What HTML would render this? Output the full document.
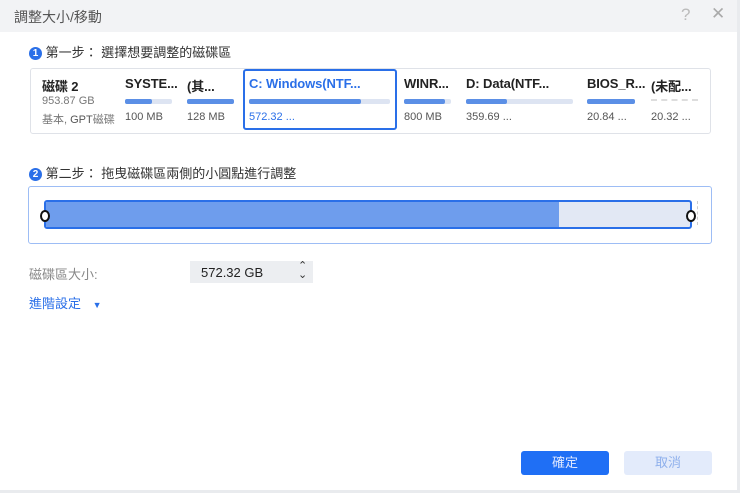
<!DOCTYPE html>
<html><head><meta charset="utf-8"><style>
body{margin:0;width:740px;height:493px;background:#e9ebee;font-family:"Liberation Sans","Noto Sans CJK TC",sans-serif;position:relative;overflow:hidden}
.win{position:absolute;left:0;top:0;width:737px;height:490px;background:#fff}
.title{position:absolute;left:0;top:0;width:737px;height:32px;background:#f2f3f5;font-size:14px;color:#555}
.a{position:absolute;white-space:nowrap}
.num{display:inline-block;width:13px;height:13px;border-radius:50%;background:#2a6fe8;color:#fff;font-size:10px;text-align:center;line-height:13px;font-weight:bold;vertical-align:1px}
.panel{position:absolute;left:30px;top:68px;width:679px;height:64px;border:1px solid #dfe2e8;border-radius:3px}
.b{font-weight:bold;font-size:13px;color:#222;letter-spacing:-0.1px}
.s{font-size:11px;color:#555}
.bar{position:absolute;height:5px;background:#dde4f2;border-radius:2px}
.bar i{position:absolute;left:0;top:0;bottom:0;background:#5b8fe6;border-radius:2px}
</style></head><body>
<div class="win">
<div class="title"><span class="a" style="left:14px;top:7px">調整大小/移動</span>
<span class="a" style="left:681px;top:5px;color:#bbb;font-size:17px">?</span>
<span class="a" style="left:711px;top:4px;color:#aaa;font-size:17px">✕</span></div>
<div class="a" style="left:29px;top:42px;font-size:13px;color:#333"><span class="num">1</span> 第一步： 選擇想要調整的磁碟區</div>
<div class="panel"></div>
<div class="a" style="left:243px;top:69px;width:150px;height:57px;border:2px solid #2a6fe8;border-radius:3px"></div>
<div class="a b" style="left:42px;top:76px">磁碟 2</div>
<div class="a s" style="left:42px;top:95px;color:#777">953.87 GB</div>
<div class="a s" style="left:42px;top:111px;color:#777">基本, <span style="color:#555">GPT</span>磁碟</div>
<div class="a b" style="left:125px;top:76px">SYSTE...</div><div class="bar" style="left:125px;top:99px;width:47px"><i style="width:27px"></i></div><div class="a s" style="left:125px;top:111px">100 MB</div>
<div class="a b" style="left:187px;top:76px">(其...</div><div class="bar" style="left:187px;top:99px;width:47px"><i style="width:47px"></i></div><div class="a s" style="left:187px;top:111px">128 MB</div>
<div class="a b" style="left:249px;top:76px;color:#2a6fe8">C: Windows(NTF...</div><div class="bar" style="left:249px;top:99px;width:141px"><i style="width:112px"></i></div><div class="a s" style="left:249px;top:111px;color:#2a6fe8">572.32 ...</div>
<div class="a b" style="left:404px;top:76px">WINR...</div><div class="bar" style="left:404px;top:99px;width:47px"><i style="width:41px"></i></div><div class="a s" style="left:404px;top:111px">800 MB</div>
<div class="a b" style="left:466px;top:76px">D: Data(NTF...</div><div class="bar" style="left:466px;top:99px;width:107px"><i style="width:41px"></i></div><div class="a s" style="left:466px;top:111px">359.69 ...</div>
<div class="a b" style="left:587px;top:76px">BIOS_R...</div><div class="bar" style="left:587px;top:99px;width:48px"><i style="width:48px"></i></div><div class="a s" style="left:587px;top:111px">20.84 ...</div>
<div class="a b" style="left:651px;top:76px">(未配...</div><div class="a" style="left:651px;top:99px;width:47px;height:4px;border-top:2px dashed #ddd"></div><div class="a s" style="left:651px;top:111px">20.32 ...</div>
<div class="a" style="left:29px;top:163px;font-size:13px;color:#333"><span class="num">2</span> 第二步： 拖曳磁碟區兩側的小圓點進行調整</div>
<div class="a" style="left:28px;top:186px;width:682px;height:56px;border:1px solid #9dbdf5;border-radius:3px"></div>
<div class="a" style="left:44px;top:200px;width:644px;height:25px;border:2px solid #2a6fe8;border-radius:3px;background:#e2e8f4;overflow:hidden"><div style="width:513px;height:100%;background:#6e9ded"></div></div>
<div class="a" style="left:40px;top:210px;width:6px;height:8px;border:2px solid #111;border-radius:50%;background:#fff"></div>
<div class="a" style="left:686px;top:210px;width:6px;height:8px;border:2px solid #111;border-radius:50%;background:#fff"></div>
<div class="a" style="left:697px;top:201px;height:24px;border-left:1px dashed #ccc"></div>
<div class="a" style="left:29px;top:264px;font-size:13px;color:#888">磁碟區大小:</div>
<div class="a" style="left:190px;top:261px;width:123px;height:22px;background:#eceef1"></div>
<div class="a" style="left:201px;top:265px;font-size:13px;color:#222">572.32 GB</div>
<div class="a" style="left:298px;top:262px;font-size:11px;color:#333;line-height:9px">⌃<br>⌄</div>
<div class="a" style="left:29px;top:293px;font-size:13px;color:#2a6fe8">進階設定 <span style="font-size:9px;margin-left:8px">▼</span></div>
<div class="a" style="left:521px;top:451px;width:88px;height:24px;background:#1f6ff5;border-radius:3px;color:#dfe8ff;font-size:13px;text-align:center;line-height:24px">確定</div>
<div class="a" style="left:624px;top:451px;width:88px;height:24px;background:#e3ebfb;border-radius:3px;color:#8fb0ec;font-size:13px;text-align:center;line-height:24px">取消</div>
</div>
</body></html>
